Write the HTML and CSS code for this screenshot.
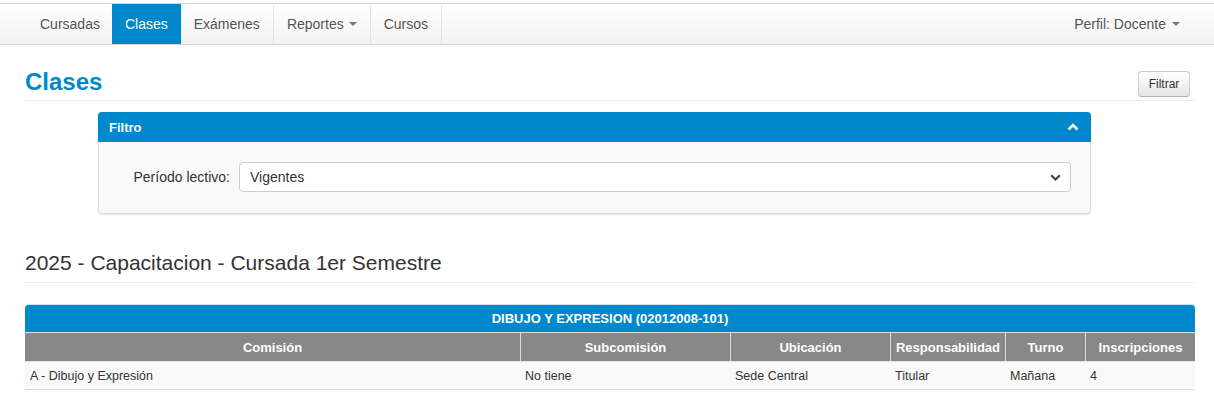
FILE: index.html
```html
<!DOCTYPE html>
<html lang="es">
<head>
<meta charset="utf-8">
<title>Clases</title>
<link rel="stylesheet" href="styles.css">
</head>
<body>
<div class="navbar">
  <ul class="nav">
    <li class="nav-item first">Cursadas</li>
    <li class="nav-item active">Clases</li>
    <li class="nav-item sep">Exámenes</li>
    <li class="nav-item sep">Reportes <span class="caret"></span></li>
    <li class="nav-item sep">Cursos</li>
  </ul>
  <div class="nav-right">Perfil: Docente <span class="caret"></span></div>
</div>

<div class="container">
  <div class="page-header">
    <h1 class="title">Clases</h1>
    <button class="btn">Filtrar</button>
  </div>

  <div class="panel">
    <div class="panel-heading">
      <span>Filtro</span>
      <svg class="chev-up" width="12" height="8" viewBox="0 0 12 8"><polyline points="1.5,6.5 6,2 10.5,6.5" fill="none" stroke="#fff" stroke-width="2.6"/></svg>
    </div>
    <div class="panel-body">
      <label class="label">Período lectivo:</label>
      <div class="select">
        <span>Vigentes</span>
        <svg class="chev-down" width="11" height="7" viewBox="0 0 11 7"><polyline points="1.2,1.2 5.5,5.5 9.8,1.2" fill="none" stroke="#444" stroke-width="2.2"/></svg>
      </div>
    </div>
  </div>

  <h2 class="subtitle">2025 - Capacitacion - Cursada 1er Semestre</h2>

  <table class="grid">
    <colgroup>
      <col class="c1"><col class="c2"><col class="c3"><col class="c4"><col class="c5"><col class="c6">
    </colgroup>
    <thead>
      <tr class="caption-row"><th colspan="6">DIBUJO Y EXPRESION (02012008-101)</th></tr>
      <tr class="head-row">
        <th>Comisión</th><th>Subcomisión</th><th>Ubicación</th><th>Responsabilidad</th><th>Turno</th><th>Inscripciones</th>
      </tr>
    </thead>
    <tbody>
      <tr class="data-row">
        <td>A - Dibujo y Expresión</td><td>No tiene</td><td>Sede Central</td><td>Titular</td><td>Mañana</td><td>4</td>
      </tr>
    </tbody>
  </table>
</div>
</body>
</html>
```
FILE: styles.css
```css
* { box-sizing: border-box; }
body {
  margin: 0;
  padding-top: 3px;
  font-family: "Liberation Sans", Arial, sans-serif;
  color: #333;
  background: #fff;
}
.navbar {
  height: 42px;
  border-top: 1px solid #d4d4d4;
  border-bottom: 1px solid #d4d4d4;
  background: linear-gradient(#ffffff, #f2f2f2);
  display: flex;
  justify-content: space-between;
  align-items: stretch;
  padding-left: 26px;
  padding-right: 34px;
}
.nav {
  list-style: none;
  margin: 0;
  padding: 0;
  display: flex;
}
.nav-item {
  display: flex;
  align-items: center;
  padding: 0 13px;
  font-size: 14px;
  color: #555;
}
.nav-item.first { padding-left: 14px; padding-right: 12px; }
.nav-item.active {
  background: #0088cc;
  color: #fff;
}
.nav-item.sep {
  border-right: 1px solid #e3e3e3;
}
.caret {
  display: inline-block;
  width: 0;
  height: 0;
  margin-left: 5px;
  border-left: 4px solid transparent;
  border-right: 4px solid transparent;
  border-top: 4px solid #777;
  vertical-align: middle;
}
.nav-right {
  display: flex;
  align-items: center;
  font-size: 14px;
  color: #555;
}
.nav-right .caret { margin-left: 6px; }

.container {
  width: 1170px;
  margin-left: 25px;
}
.page-header {
  margin-top: 22px;
  padding-bottom: 3px;
  border-bottom: 1px solid #eeeeee;
  display: flex;
  justify-content: space-between;
  align-items: flex-end;
}
.title {
  margin: 0;
  font-size: 24px;
  line-height: 30px;
  font-weight: bold;
  color: #0088cc;
}
.btn {
  height: 26px;
  width: 52px;
  margin-right: 5px;
  padding: 0;
  font-family: "Liberation Sans", Arial, sans-serif;
  font-size: 12px;
  color: #333;
  background: linear-gradient(#ffffff, #e6e6e6);
  border: 1px solid #cccccc;
  border-bottom-color: #b3b3b3;
  border-radius: 4px;
  box-shadow: inset 0 1px 0 rgba(255,255,255,.2), 0 1px 2px rgba(0,0,0,.05);
}

.panel {
  margin-top: 11px;
  margin-left: 73px;
  width: 993px;
  border: 1px solid #dddddd;
  border-radius: 4px;
  box-shadow: 0 1px 2px rgba(0,0,0,.1);
  background: #f9f9f9;
}
.panel-heading {
  height: 30px;
  margin: -1px -1px 0 -1px;
  padding: 0 12px 0 11px;
  background: #0088cc;
  border-radius: 4px 4px 0 0;
  color: #fff;
  font-size: 13px;
  font-weight: bold;
  display: flex;
  align-items: center;
  justify-content: space-between;
}
.panel-body {
  height: 71px;
  padding: 20px 19px 0 33px;
  display: flex;
  align-items: flex-start;
}
.label {
  width: 98px;
  font-size: 14px;
  color: #333;
  line-height: 30px;
  text-align: right;
}
.select {
  margin-left: 9px;
  flex: 1;
  height: 30px;
  border: 1px solid #cccccc;
  border-radius: 4px;
  background: #fff;
  display: flex;
  align-items: center;
  justify-content: space-between;
  padding: 0 9px 0 10px;
  font-size: 14px;
  color: #333;
}

.subtitle {
  margin: 36px 0 0 0;
  padding-bottom: 7px;
  border-bottom: 1px solid #eeeeee;
  font-size: 21px;
  line-height: 25px;
  font-weight: normal;
  color: #333;
}

.grid {
  margin-top: 21px;
  width: 1170px;
  table-layout: fixed;
  border-collapse: separate;
  border-spacing: 0;
  font-size: 12.5px;
}
.c1 { width: 495px; }
.c2 { width: 210px; }
.c3 { width: 160px; }
.c4 { width: 115px; }
.c5 { width: 80px; }
.c6 { width: 110px; }
.caption-row th {
  height: 28px;
  background: #0088cc;
  color: #fff;
  font-size: 13px;
  font-weight: bold;
  text-align: center;
  border-radius: 4px 4px 0 0;
  border-top: 1px solid #cfe3f0;
  padding: 0;
}
.head-row th {
  height: 29px;
  background: #888888;
  color: #fff;
  font-weight: bold;
  font-size: 13px;
  text-align: center;
  padding: 0;
  border-top: 1px solid #dddddd;
  border-left: 1px solid #dddddd;
}
.head-row th:first-child { border-left: 0; }
.data-row td {
  height: 29px;
  background: #f9f9f9;
  color: #333;
  padding: 0 5px;
  border-top: 1px solid #e5e5e5;
  border-bottom: 1px solid #dddddd;
}
```
